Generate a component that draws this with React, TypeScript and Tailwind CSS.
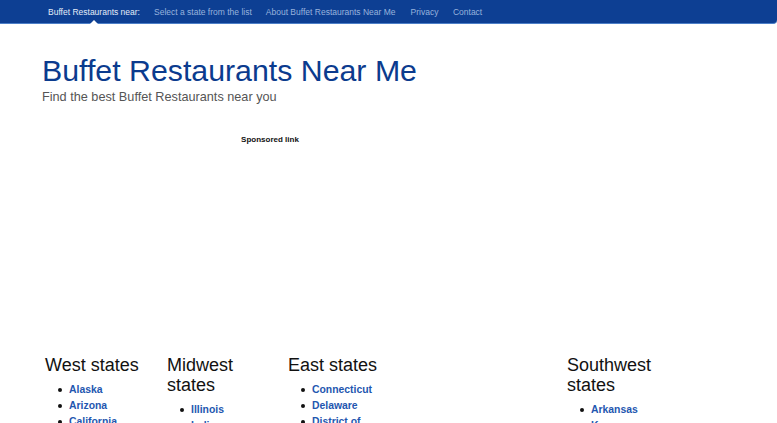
import React from "react";

const font = { fontFamily: '"Liberation Sans", Arial, Helvetica, sans-serif' };

function Col({ title, items, width }: { title: string; items: string[]; width: string }) {
  return (
    <div className={`${width} shrink-0`}>
      <div className="w-[106px]">
        <h3 className="text-[18px] leading-[20px] text-[#111111] font-normal">{title}</h3>
        <ul className="mt-[7px]">
          {items.map((s) => (
            <li key={s} className="flex items-start">
              <span className="ml-[13px] mt-[6px] w-[4px] h-[4px] rounded-full bg-[#111111] shrink-0" />
              <a className="ml-[7px] text-[10.4px] leading-[16px] font-bold text-[#1f57b0]">{s}</a>
            </li>
          ))}
        </ul>
      </div>
    </div>
  );
}

export default function App() {
  return (
    <div style={font} className="w-[777px] h-[423px] overflow-hidden bg-white">
      <nav className="relative h-[24px] bg-[#0d3f93] border-b border-[#4c7fc8] rounded-br-[4px] flex items-center pl-[41px] pt-[1px] text-[8.5px]">
        <span className="px-[7px] text-[#e4ecf8]">Buffet Restaurants near:</span>
        <span className="px-[7px] text-[#98b3dd]">Select a state from the list</span>
        <span className="pl-[7px] pr-[7.5px] text-[#98b3dd]">About Buffet Restaurants Near Me</span>
        <span className="px-[7.5px] text-[#98b3dd]">Privacy</span>
        <span className="px-[7px] text-[#98b3dd]">Contact</span>
        <span className="absolute left-[90px] bottom-[-1px] w-0 h-0 border-l-[4px] border-r-[4px] border-b-[4px] border-l-transparent border-r-transparent border-b-white" />
      </nav>
      <div className="pl-[42px]">
        <h1 className="mt-[30px] text-[30.3px] leading-[33px] text-[#0b3b8e] font-normal">Buffet Restaurants Near Me</h1>
        <p className="mt-[1px] text-[12.7px] leading-[18px] text-[#555555]">Find the best Buffet Restaurants near you</p>
        <div className="mt-[29px] w-[456px] text-center text-[8px] leading-[10px] font-bold text-[#111111]">Sponsored link</div>
        <div className="h-[210px]" />
      </div>
      <div className="flex pl-[45px]">
        <Col title="West states" items={["Alaska", "Arizona", "California"]} width="w-[122px]" />
        <Col title="Midwest states" items={["Illinois", "Indiana"]} width="w-[121px]" />
        <Col title="East states" items={["Connecticut", "Delaware", "District of Columbia"]} width="w-[279px]" />
        <Col title="Southwest states" items={["Arkansas", "Kansas"]} width="w-[122px]" />
      </div>
    </div>
  );
}
